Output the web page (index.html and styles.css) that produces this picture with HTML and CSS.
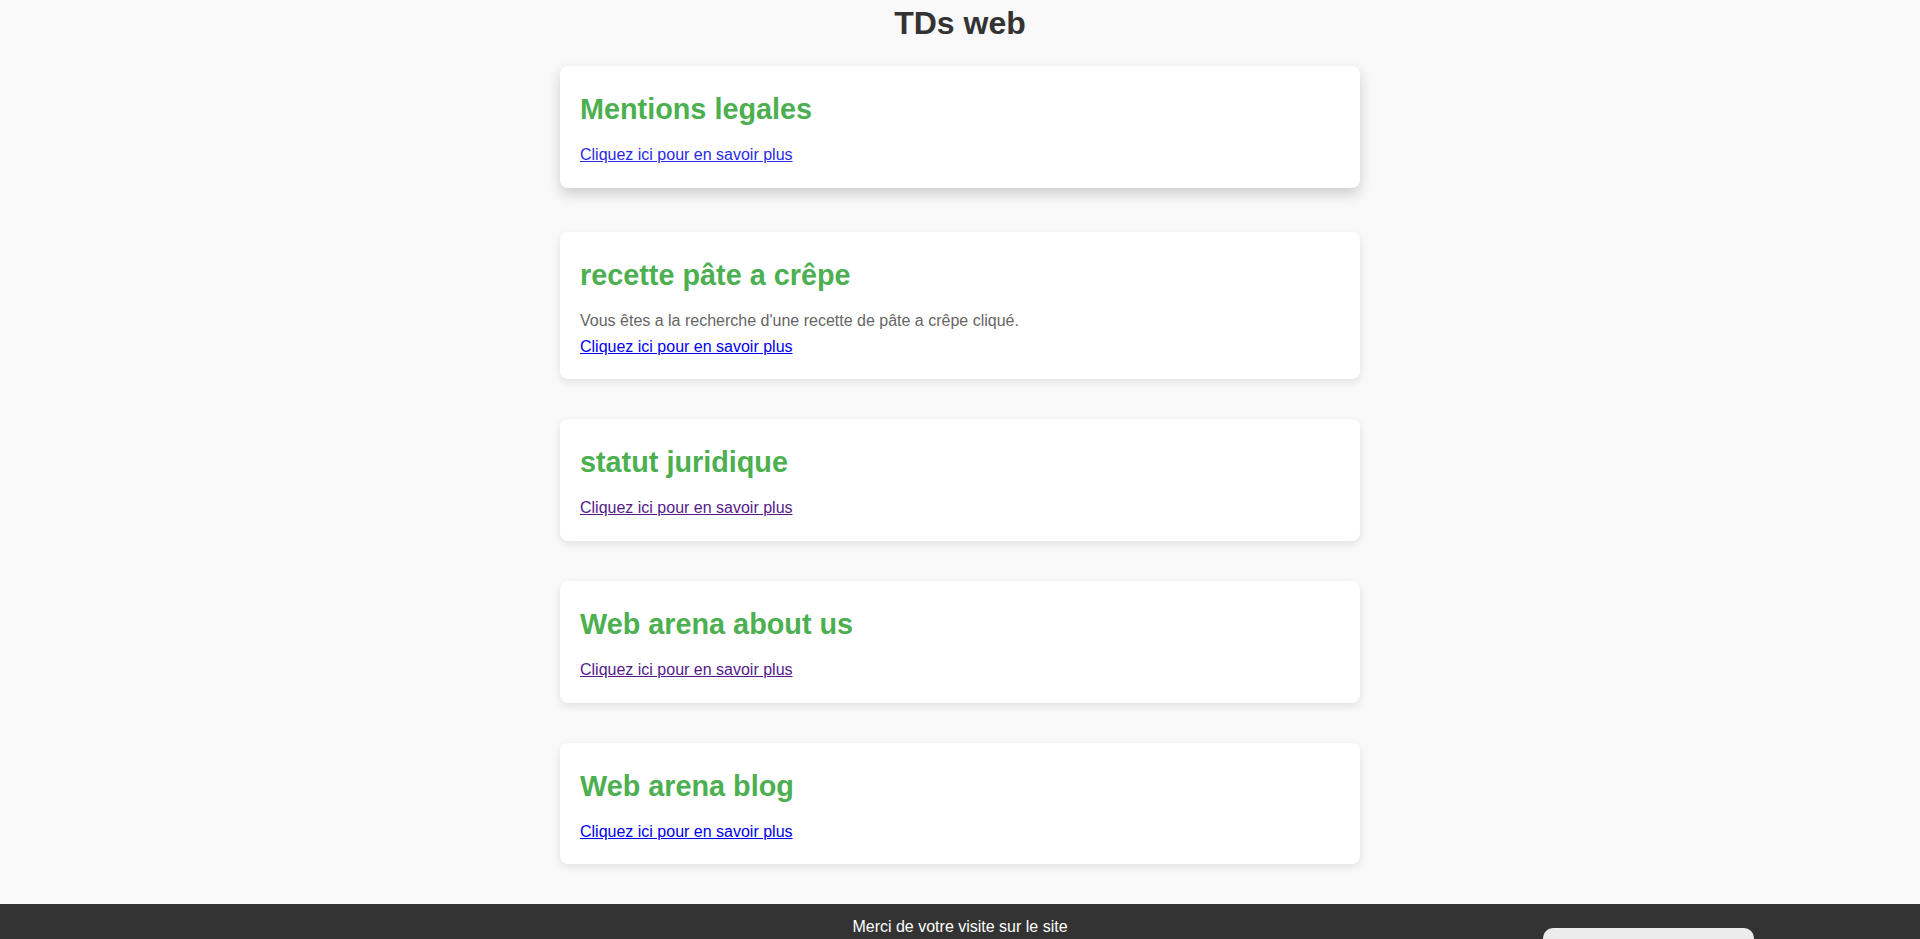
FILE: index.html
```html
<!DOCTYPE html>
<html lang="fr">
<head>
<meta charset="utf-8">
<title>TDs web</title>
<link rel="stylesheet" href="styles.css">
</head>
<body>
<header class="site-header">
  <h1 class="site-title">TDs web</h1>
</header>
<main class="card-list">
  <article class="card card--hover">
    <h2 class="card-title">Mentions legales</h2>
    <a class="card-link card-link--active" href="#">Cliquez ici pour en savoir plus</a>
  </article>
  <article class="card">
    <h2 class="card-title">recette pâte a crêpe</h2>
    <p class="card-text">Vous êtes a la recherche d'une recette de pâte a crêpe cliqué.</p>
    <a class="card-link" href="#">Cliquez ici pour en savoir plus</a>
  </article>
  <article class="card">
    <h2 class="card-title">statut juridique</h2>
    <a class="card-link card-link--visited" href="#">Cliquez ici pour en savoir plus</a>
  </article>
  <article class="card">
    <h2 class="card-title">Web arena about us</h2>
    <a class="card-link card-link--visited" href="#">Cliquez ici pour en savoir plus</a>
  </article>
  <article class="card">
    <h2 class="card-title">Web arena blog</h2>
    <a class="card-link" href="#">Cliquez ici pour en savoir plus</a>
  </article>
</main>
<footer class="site-footer">
  <p class="footer-text">Merci de votre visite sur le site</p>
  <div class="footer-widget"></div>
</footer>
</body>
</html>
```
FILE: styles.css
```css
* {
  box-sizing: border-box;
}

html, body {
  margin: 0;
  padding: 0;
}

body {
  background: #f9f9f9;
  font-family: "Liberation Sans", Arial, sans-serif;
  font-size: 16px;
  line-height: 1.6;
  color: #333;
}

.site-header {
  padding-top: 4px;
  text-align: center;
}

.site-title {
  margin: 0;
  font-size: 32px;
  line-height: 1.2;
  font-weight: bold;
  color: #333;
}

.card-list {
  padding-top: 28px;
}

.card {
  display: block;
  max-width: 800px;
  margin: 0 auto 40px;
  padding: 20px;
  background: #fff;
  border-radius: 8px;
  box-shadow: 0 3px 8px rgba(0, 0, 0, 0.1);
}

.card--hover {
  transform: translateY(-4px);
  box-shadow: 0 6px 14px rgba(0, 0, 0, 0.18);
}

.card-title {
  margin: 0 0 10px;
  font-size: 28.8px;
  line-height: 1.6;
  font-weight: bold;
  color: #4caf50;
}

.card-text {
  margin: 0;
  color: #666;
}

.card-link {
  display: block;
  width: max-content;
  color: #0000ee;
  text-decoration: underline;
}

.card-link--active {
  color: #2a2ae6;
}

.card-link--visited {
  color: #551a8b;
}

.site-footer {
  position: relative;
  background: #333;
  color: #fff;
  padding: 10px 0;
  text-align: center;
}

.footer-text {
  margin: 0;
}

.footer-widget {
  position: absolute;
  top: 24px;
  right: 166px;
  width: 211px;
  height: 44px;
  background: #ececec;
  border-radius: 10px;
}
```
